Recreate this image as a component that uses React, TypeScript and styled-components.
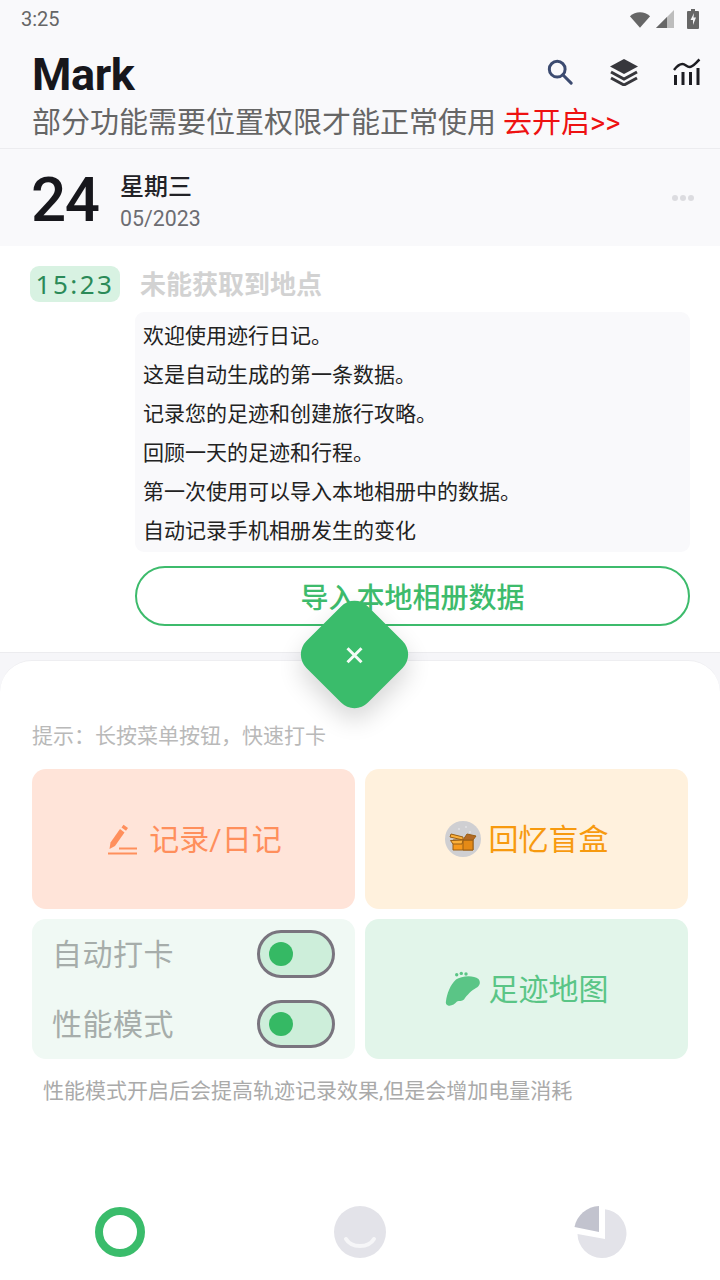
import React from 'react'
import styled, { createGlobalStyle } from 'styled-components'

const GlobalStyle = createGlobalStyle`
    html, body {
        margin: 0;
        padding: 0;
        background: #ffffff;
    }
    * {
        box-sizing: border-box;
    }
`

const cjk = `Roboto, "Noto Sans CJK SC", sans-serif`

const Page = styled.div`
    position: relative;
    display: flex;
    flex-direction: column;
    width: 720px;
    height: 1280px;
    overflow: hidden;
    background: #ffffff;
    font-family: ${cjk};
`

const StatusBar = styled.div`
    display: flex;
    align-items: center;
    justify-content: space-between;
    height: 38px;
    padding: 0 21px;
    background: #f9f9fb;
    color: #666666;
    font-size: 20px;
`

const StatusIcons = styled.div`
    display: flex;
    align-items: center;
    gap: 5px;
`

const Header = styled.header`
    display: flex;
    flex-direction: column;
    height: 111px;
    padding: 13px 17px 0 32px;
    background: #f9f9fb;
    border-bottom: 1px solid #ececef;
`

const TitleRow = styled.div`
    display: flex;
    align-items: center;
    justify-content: space-between;
    height: 48px;
`

const Title = styled.h1`
    margin: 0;
    color: #17171c;
    font-size: 45px;
    font-weight: 700;
    line-height: 48px;
    letter-spacing: -0.4px;
`

const Tools = styled.div`
    display: flex;
    align-items: center;
    gap: 31.5px;
    margin-top: -6px;
`

const Tool = styled.span`
    display: flex;
    align-items: center;
    justify-content: center;
    width: 32px;
    height: 32px;
`

const Notice = styled.div`
    margin-top: 4px;
    color: #666666;
    font-size: 29px;
    line-height: 40px;
    white-space: nowrap;
`

const NoticeLink = styled.span`
    margin-left: 7px;
    color: #ee1111;
`

const DateRow = styled.div`
    display: flex;
    align-items: center;
    height: 97px;
    padding: 8px 26px 0 31px;
    background: #f9f9fb;
`

const DayNumber = styled.div`
    width: 89px;
    margin-top: -4px;
    color: #17171c;
    font-size: 62px;
    font-weight: 500;
    line-height: 70px;
    letter-spacing: -1.4px;
`

const DateText = styled.div`
    display: flex;
    flex-direction: column;
    flex: 1;
`

const Weekday = styled.div`
    color: #222226;
    font-size: 24px;
    font-weight: 500;
    line-height: 34px;
`

const MonthYear = styled.div`
    color: #6d6d72;
    font-size: 21.3px;
    line-height: 30px;
`

const MoreDots = styled.div`
    display: flex;
    gap: 2px;
    margin-top: -8px;
`

const Dot = styled.span`
    width: 6px;
    height: 6px;
    border-radius: 50%;
    background: #dcdce0;
`

const Entry = styled.section`
    display: flex;
    flex-direction: column;
    height: 406px;
    padding: 20px 30px 0;
    background: #ffffff;
`

const EntryHead = styled.div`
    display: flex;
    align-items: center;
    height: 36px;
`

const TimeTag = styled.div`
    display: flex;
    align-items: center;
    justify-content: center;
    width: 90px;
    height: 36px;
    border-radius: 9px;
    background: #d8f2e2;
    color: #2b8a58;
    font-family: "Noto Sans", sans-serif;
    font-size: 26px;
    letter-spacing: 2.5px;
`

const Place = styled.div`
    margin: -4px 0 0 20px;
    color: #d2d2d2;
    font-size: 26px;
    font-weight: 700;
`

const NoteCard = styled.div`
    display: flex;
    flex-direction: column;
    height: 240px;
    margin: 10px 0 0 105px;
    padding: 5px 8px 3px;
    border-radius: 9px;
    background: #f9f9fb;
`

const NoteLine = styled.div`
    height: 39px;
    color: #222222;
    font-size: 21px;
    line-height: 39px;
    white-space: nowrap;
`

const ImportButton = styled.div`
    display: flex;
    align-items: center;
    justify-content: center;
    height: 60px;
    margin: 14px 0 0 105px;
    border: 2px solid #3dbb6c;
    border-radius: 30px;
    color: #3dbb6c;
    font-size: 28px;
    font-weight: 500;
`

const Strip = styled.div`
    height: 8px;
    background: #f6f6f9;
    border-top: 1px solid #ececef;
`

// 角の外側だけ薄いグレーを見せる
const SheetBack = styled.div`
    display: flex;
    flex: 1;
    background: linear-gradient(#f6f6f9 32px, #ffffff 32px);
`

const Sheet = styled.section`
    display: flex;
    flex-direction: column;
    flex: 1;
    padding: 0 32px;
    background: #ffffff;
    border-top: 1px solid #eeeef1;
    border-radius: 32px 32px 0 0;
`

const Hint = styled.div`
    margin-top: 60px;
    color: #b9b9b9;
    font-size: 21px;
    line-height: 30px;
`

const ActionGrid = styled.div`
    display: grid;
    grid-template-columns: 323px 323px;
    grid-template-rows: 140px 140px;
    gap: 10px;
    margin-top: 18px;
`

const ActionCard = styled.div<{ $bg: string; $fg: string; $gap: number; $nudge: number }>`
    display: flex;
    align-items: center;
    justify-content: center;
    gap: ${p => p.$gap}px;
    padding-left: ${p => p.$nudge}px;
    border-radius: 14px;
    background: ${p => p.$bg};
    color: ${p => p.$fg};
    font-size: 30px;
`

const ActionLabel = styled.span`
    padding-bottom: 4px;
`

const SwitchCard = styled.div`
    display: flex;
    flex-direction: column;
    justify-content: center;
    gap: 22px;
    padding: 0 20px;
    border-radius: 14px;
    background: #f0f9f4;
`

const SwitchRow = styled.div`
    display: flex;
    align-items: center;
    justify-content: space-between;
    color: #a6adaa;
    font-size: 30px;
`

const SwitchLabel = styled.span`
    padding-bottom: 4px;
    letter-spacing: 0.5px;
`

const Switch = styled.div`
    display: flex;
    align-items: center;
    width: 78px;
    height: 48px;
    padding-left: 9px;
    border: 3px solid #79747e;
    border-radius: 24px;
    background: #cdeeda;
`

const Knob = styled.span`
    width: 24px;
    height: 24px;
    border-radius: 50%;
    background: #35b964;
`

const Footnote = styled.div`
    margin: 17px 0 0 11px;
    color: #aaaaaa;
    font-size: 21px;
    line-height: 30px;
    white-space: nowrap;
`

const BottomNav = styled.nav`
    display: grid;
    grid-template-columns: repeat(3, 1fr);
    margin: auto -32px 0;
    padding-bottom: 22px;
`

const NavItem = styled.div`
    display: flex;
    align-items: center;
    justify-content: center;
    height: 52px;
`

const Fab = styled.div`
    position: absolute;
    left: 310.5px;
    top: 611px;
    display: flex;
    align-items: center;
    justify-content: center;
    width: 87px;
    height: 87px;
    border-radius: 19px;
    background: #3abc6b;
    box-shadow: 8px 8px 24px rgba(0, 0, 0, 0.16);
    transform: rotate(45deg);
`

const FabIcon = styled.svg`
    transform: rotate(-45deg);
`

const notes = [
    '欢迎使用迹行日记。',
    '这是自动生成的第一条数据。',
    '记录您的足迹和创建旅行攻略。',
    '回顾一天的足迹和行程。',
    '第一次使用可以导入本地相册中的数据。',
    '自动记录手机相册发生的变化',
]

function StatusGlyphs() {
    return (
        <StatusIcons>
            <svg width="22" height="17" viewBox="0 0 24 18">
                <path d="M1 5.5C4 2.5 8 1 12 1s8 1.5 11 4.5L12 18z" fill="#666" />
            </svg>
            <svg width="18" height="18" viewBox="0 0 18 18">
                <path d="M0 18L18 0v18z" fill="#bdbdbd" />
                <path d="M0 18L11 7v11z" fill="#666" />
            </svg>
            <svg width="20" height="20" viewBox="4 0 20 20">
                <path d="M16 0h4v2h3a1 1 0 0 1 1 1v16a1 1 0 0 1-1 1H13a1 1 0 0 1-1-1V3a1 1 0 0 1 1-1h3z" fill="#666" />
                <path d="M19 4l-3.5 7H18v5l3-7.500h-2.500z" fill="#f4f4f6" />
            </svg>
        </StatusIcons>
    )
}

function SearchIcon() {
    return (
        <svg width="26" height="26" viewBox="0 0 28 28" fill="none" stroke="#3c4b70" strokeWidth="3.2">
            <circle cx="11" cy="11" r="8.500" />
            <path d="M17 17l9 9" strokeLinecap="round" />
        </svg>
    )
}

function LayersIcon() {
    return (
        <svg width="30" height="27" viewBox="0 0 30 27">
            <path d="M15 0l14 7.500L15 15 1 7.500z" fill="#37373c" />
            <path d="M2 13l13 7 13-7M2 19l13 7 13-7" fill="none" stroke="#37373c" strokeWidth="3" />
        </svg>
    )
}

function StatsIcon() {
    return (
        <svg width="28" height="28" viewBox="0 0 28 28" fill="none" stroke="#1d1d22" strokeWidth="3">
            <path d="M2.500 17v10M10 14v13M17.500 14v13M25 10v17" />
            <path d="M1 12C4 8 7 6 9.500 6c3 0 4 3 7 3 3.500 0 6-4 10-7.500" strokeWidth="2.400" />
        </svg>
    )
}

function PencilIcon() {
    return (
        <svg width="32" height="33" viewBox="0 0 32 33" fill="#ff8f5c">
            <path d="M2.500 26L3.500 19.500L13 6L17.500 9.500L8 23Z" />
            <path d="M14.500 4.500L16.500 1.800L21 5L19 7.800Z" />
            <path d="M1 30.500h29M12 25.500h18" stroke="#ff8f5c" strokeWidth="2" />
        </svg>
    )
}

function BoxIcon() {
    return (
        <svg width="36" height="36" viewBox="0 0 36 36">
            <circle cx="18" cy="18" r="18" fill="#cfcfd2" />
            <g fill="#e2e2e4">
                <circle cx="14" cy="8" r="1" />
                <circle cx="21" cy="6" r="1" />
                <circle cx="25" cy="11" r="1" />
            </g>
            <path d="M8 19h20v10H8z" fill="#f7991c" stroke="#9a5f14" strokeWidth="1" />
            <path d="M18 19h10v10H18z" fill="#e58a16" stroke="#9a5f14" strokeWidth="1" />
            <path d="M18 19L5 16l1-3 12 3z" fill="#fbb03b" stroke="#9a5f14" strokeWidth="1" />
            <path d="M5.500 19.500L18 19l-1 4H8z" fill="#fbb03b" stroke="#9a5f14" strokeWidth="1" />
            <path d="M18 19l4-6 9 2-3 4z" fill="#b36a25" stroke="#9a5f14" strokeWidth="1" />
        </svg>
    )
}

function FootIcon() {
    return (
        <svg width="36" height="36" viewBox="0 0 36 36" fill="#5ac586">
            <path d="M1 30C2 23 5 14 11 8.500C16 5 28 3.500 33.500 8C36 11 35 15 31 17C27 19 22 24 19 28.500C17 30.500 14 29.500 12 30.500C10 33 6 35.500 3 34.500C1 34 0.500 32 1 30Z" />
            <circle cx="11.700" cy="3.800" r="1.700" />
            <circle cx="16.300" cy="2.400" r="1.700" />
            <circle cx="21" cy="3" r="1.700" />
        </svg>
    )
}

function RingIcon() {
    return (
        <svg width="50" height="50" viewBox="0 0 50 50">
            <circle cx="25" cy="25" r="21" fill="none" stroke="#3abc6b" strokeWidth="8" />
        </svg>
    )
}

function SmileIcon() {
    return (
        <svg width="52" height="52" viewBox="0 0 52 52">
            <circle cx="26" cy="26" r="26" fill="#e3e3e9" />
            <path d="M12 33c3 5 7 7 14 7s11-2 14-7" fill="none" stroke="#f6f6f8" strokeWidth="4" strokeLinecap="round" />
        </svg>
    )
}

function PieIcon() {
    return (
        <svg width="54" height="54" viewBox="0 0 54 54">
            <path d="M32 4.200A24.500 24.500 0 1 1 4.500 29L32 34Z" fill="#e3e3e9" />
            <path d="M26 1A26 26 0 0 0 1.500 22L26 27Z" fill="#c2c3ce" />
        </svg>
    )
}

export default function App() {
    return (
        <Page>
            <GlobalStyle />
            <StatusBar>
                <span>3:25</span>
                <StatusGlyphs />
            </StatusBar>

            <Header>
                <TitleRow>
                    <Title>Mark</Title>
                    <Tools>
                        <Tool><SearchIcon /></Tool>
                        <Tool><LayersIcon /></Tool>
                        <Tool><StatsIcon /></Tool>
                    </Tools>
                </TitleRow>
                <Notice>
                    部分功能需要位置权限才能正常使用
                    <NoticeLink>去开启&gt;&gt;</NoticeLink>
                </Notice>
            </Header>

            <DateRow>
                <DayNumber>24</DayNumber>
                <DateText>
                    <Weekday>星期三</Weekday>
                    <MonthYear>05/2023</MonthYear>
                </DateText>
                <MoreDots>
                    <Dot />
                    <Dot />
                    <Dot />
                </MoreDots>
            </DateRow>

            <Entry>
                <EntryHead>
                    <TimeTag>15:23</TimeTag>
                    <Place>未能获取到地点</Place>
                </EntryHead>
                <NoteCard>
                    {notes.map(line => (
                        <NoteLine key={line}>{line}</NoteLine>
                    ))}
                </NoteCard>
                <ImportButton>导入本地相册数据</ImportButton>
            </Entry>

            <Strip />

            <SheetBack>
                <Sheet>
                    <Hint>提示：长按菜单按钮，快速打卡</Hint>
                    <ActionGrid>
                        <ActionCard $bg="#ffe4d9" $fg="#ff8f5c" $gap={10} $nudge={2}>
                            <PencilIcon />
                            <ActionLabel>记录/日记</ActionLabel>
                        </ActionCard>
                        <ActionCard $bg="#fff1dd" $fg="#f79a0f" $gap={8} $nudge={0}>
                            <BoxIcon />
                            <ActionLabel>回忆盲盒</ActionLabel>
                        </ActionCard>
                        <SwitchCard>
                            <SwitchRow>
                                <SwitchLabel>自动打卡</SwitchLabel>
                                <Switch><Knob /></Switch>
                            </SwitchRow>
                            <SwitchRow>
                                <SwitchLabel>性能模式</SwitchLabel>
                                <Switch><Knob /></Switch>
                            </SwitchRow>
                        </SwitchCard>
                        <ActionCard $bg="#e2f5ea" $fg="#5ac586" $gap={8} $nudge={0}>
                            <FootIcon />
                            <ActionLabel>足迹地图</ActionLabel>
                        </ActionCard>
                    </ActionGrid>
                    <Footnote>性能模式开启后会提高轨迹记录效果,但是会增加电量消耗</Footnote>
                    <BottomNav>
                        <NavItem><RingIcon /></NavItem>
                        <NavItem><SmileIcon /></NavItem>
                        <NavItem><PieIcon /></NavItem>
                    </BottomNav>
                </Sheet>
            </SheetBack>

            <Fab>
                <FabIcon width="20" height="20" viewBox="0 0 20 20">
                    <path d="M3 3l14 14M17 3L3 17" stroke="#f2fbf5" strokeWidth="3" />
                </FabIcon>
            </Fab>
        </Page>
    )
}
